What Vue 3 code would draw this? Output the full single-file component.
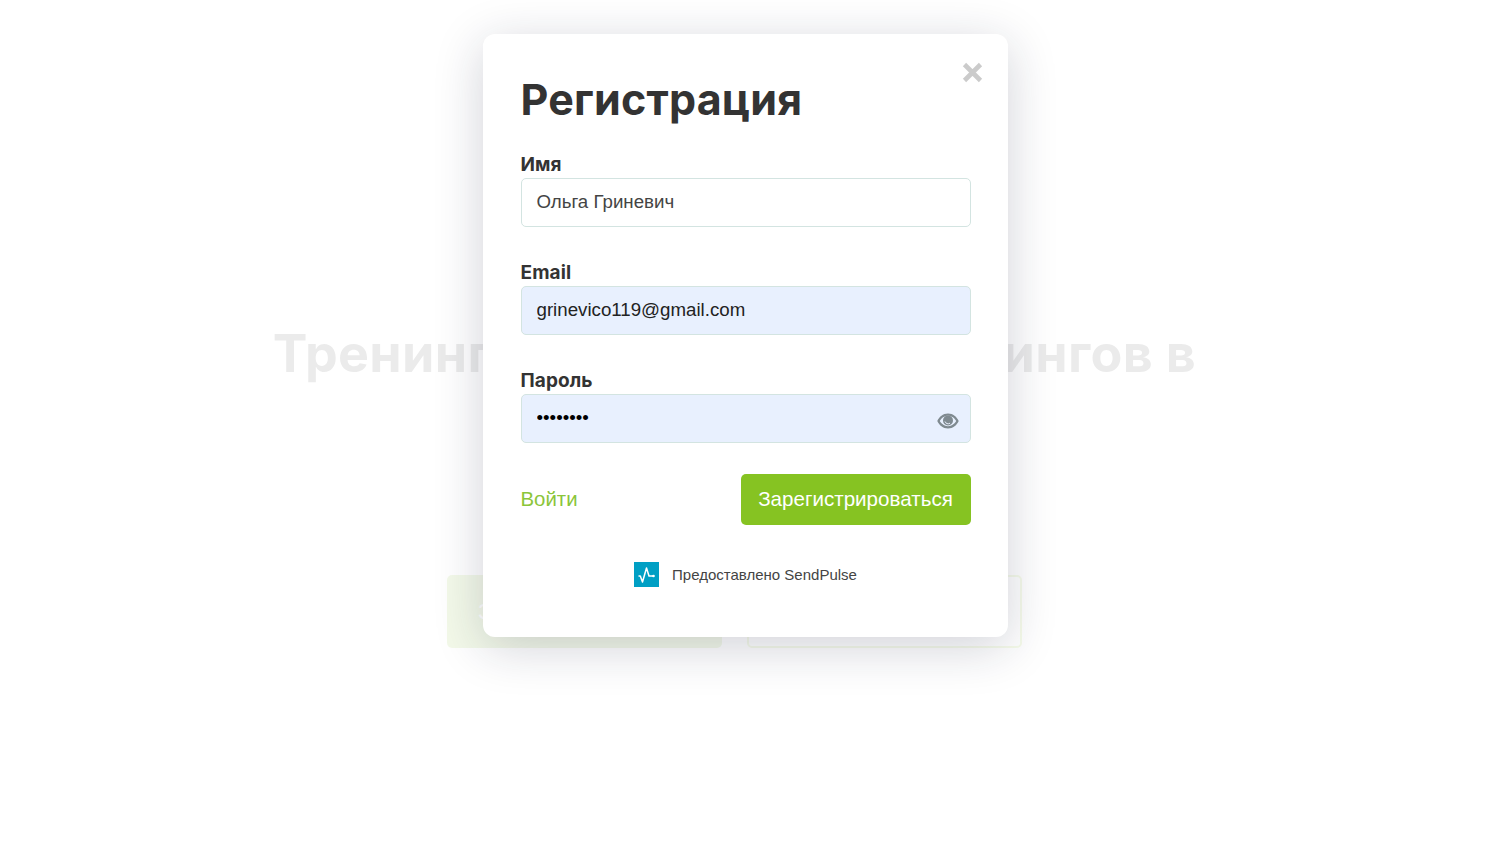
<script setup>
const fields = [
  { label: 'Имя', value: 'Ольга Гриневич', type: 'text', filled: false },
  { label: 'Email', value: 'grinevico119@gmail.com', type: 'text', filled: true },
  { label: 'Пароль', value: 'password', type: 'password', filled: true, eye: true }
]
</script>

<template>
  <div class="page">
    <section class="hero">
      <h2 class="hero-title">Тренинг для тренеров тренингов в</h2>
      <div class="hero-actions">
        <span class="hero-btn primary">Зарегистрироваться</span>
        <span class="hero-btn outline">Подробнее</span>
      </div>
    </section>

    <div class="overlay">
      <div class="modal">
        <button class="close" aria-label="Закрыть">
          <svg width="21" height="21" viewBox="0 0 21 21"><path d="M2.5 2.5 18.500 18.500M18.500 2.500 2.500 18.500" stroke="#cbcbcb" stroke-width="4.600" fill="none" /></svg>
        </button>
        <h1 class="title">Регистрация</h1>
        <form class="form" @submit.prevent>
          <div v-for="f in fields" :key="f.label" class="field">
            <label class="label">{{ f.label }}</label>
            <div class="input-wrap">
              <input class="input" :class="{ filled: f.filled, dots: f.type === 'password' }" :type="f.type" :value="f.value" />
              <svg v-if="f.eye" class="eye" width="22" height="18" viewBox="0 0 22 18">
                <path fill-rule="evenodd" fill="#7f8a90" d="M11 1.500C6 1.500 2 5 .3 9 2 13 6 16.500 11 16.500S20 13 21.700 9C20 5 16 1.500 11 1.500ZM11 3.800C14.600 3.800 17.700 6.300 19.200 9 17.700 11.700 14.600 14.200 11 14.200S4.300 11.700 2.800 9C4.300 6.300 7.400 3.800 11 3.800Z" />
                <circle cx="11" cy="8.500" r="5" fill="#7f8a90" />
                <path d="M8 9.500a3.300 3.300 0 0 0 5 1.700" stroke="#e8effc" stroke-width="1" fill="none" />
              </svg>
            </div>
          </div>
          <div class="actions">
            <a class="login">Войти</a>
            <button class="submit" type="submit">Зарегистрироваться</button>
          </div>
        </form>
        <div class="powered">
          <svg class="logo" width="25" height="25" viewBox="0 0 25 25">
            <rect width="25" height="25" fill="#009fc4" />
            <path d="M4.500 14h1.800l2.200 6 4-14 2.500 8h4.500" stroke="#fff" stroke-width="1.500" fill="none" stroke-linejoin="round" />
            <circle cx="19.500" cy="14" r="1.300" fill="#fff" />
          </svg>
          <span>Предоставлено SendPulse</span>
        </div>
      </div>
    </div>
  </div>
</template>

<style>
html, body { margin: 0; background: #fff; }
</style>

<style scoped>
.page {
  position: relative;
  height: 866px;
  overflow: hidden;
  background: #fff;
}
.hero {
  display: flex;
  flex-direction: column;
  align-items: center;
  padding-top: 321px;
  padding-right: 21px;
}
.hero-title {
  margin: 0;
  font: 700 52px/66px Inter, sans-serif;
  letter-spacing: 0.35px;
  color: #333;
  white-space: nowrap;
}
.hero-actions {
  display: flex;
  gap: 25px;
  margin-top: 188px;
}
.hero-btn {
  box-sizing: border-box;
  width: 275px;
  height: 73px;
  display: flex;
  align-items: center;
  justify-content: center;
  border-radius: 5px;
  font: 22.5px "Liberation Sans", sans-serif;
}
.primary { background: #86c322; color: #fff; }
.outline { border: 2px solid #a3cf2a; color: #86c322; }
.overlay {
  position: absolute;
  inset: 0;
  display: flex;
  justify-content: center;
  align-items: flex-start;
  padding-top: 34px;
  background: rgba(255, 255, 255, 0.9);
}
.modal {
  position: relative;
  box-sizing: border-box;
  width: 525px;
  height: 603px;
  padding: 37px 37px 0 38px;
  background: #fff;
  border-radius: 12px;
  box-shadow: 0 10px 50px rgba(25, 30, 60, 0.2);
}
.close {
  position: absolute;
  top: 28px;
  right: 25px;
  padding: 0;
  border: 0;
  background: none;
  line-height: 0;
}
.title {
  margin: 0;
  font: 700 43px/56px Inter, sans-serif;
  letter-spacing: 0.2px;
  color: #333;
}
.form { margin-top: 25px; }
.field { height: 108px; }
.label {
  display: block;
  font: 700 19px/26px Inter, sans-serif;
  letter-spacing: 0.1px;
  color: #333;
}
.input-wrap { position: relative; }
.input {
  box-sizing: border-box;
  display: block;
  width: 100%;
  height: 49px;
  padding: 0 15px 2px;
  border: 1px solid #d3e4e1;
  border-radius: 5px;
  background: #fff;
  color: #444;
  font: 18.7px "Liberation Sans", sans-serif;
  outline: none;
}
.input.filled { background: #e8f0fe; color: #222; }
.input.dots { color: #000; }
.eye { position: absolute; right: 12px; top: 18px; }
.actions {
  display: flex;
  justify-content: space-between;
  align-items: center;
  margin-top: -2px;
}
.login {
  font: 20.4px "Liberation Sans", sans-serif;
  color: #8bc53a;
}
.submit {
  width: 230px;
  height: 51px;
  padding: 0 0 2px;
  border: 0;
  border-radius: 5px;
  background: #86c322;
  color: #fff;
  font: 20.6px "Liberation Sans", sans-serif;
}
.powered {
  display: flex;
  align-items: center;
  justify-content: center;
  gap: 13px;
  margin-top: 37px;
  font: 15px "Liberation Sans", sans-serif;
  color: #444;
}
</style>
